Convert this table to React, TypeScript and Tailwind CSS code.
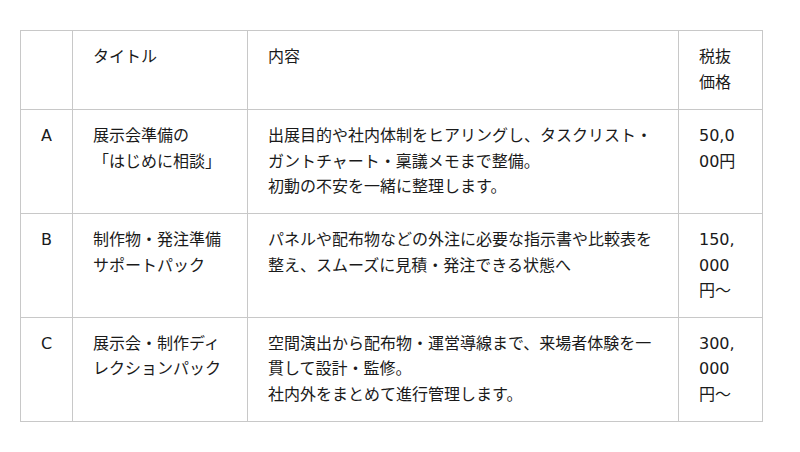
const plans = [
  {
    id: "A",
    title: (
      <>
        展示会準備の
        <br />
        「はじめに相談」
      </>
    ),
    body: (
      <>
        出展目的や社内体制をヒアリングし、タスクリスト・ガントチャート・稟議メモまで整備。
        <br />
        初動の不安を一緒に整理します。
      </>
    ),
    price: "50,000円",
  },
  {
    id: "B",
    title: (
      <>
        制作物・発注準備
        <br />
        サポートパック
      </>
    ),
    body: <>パネルや配布物などの外注に必要な指示書や比較表を整え、スムーズに見積・発注できる状態へ</>,
    price: "150,000円〜",
  },
  {
    id: "C",
    title: <>展示会・制作ディレクションパック</>,
    body: (
      <>
        空間演出から配布物・運営導線まで、来場者体験を一貫して設計・監修。
        <br />
        社内外をまとめて進行管理します。
      </>
    ),
    price: "300,000円〜",
  },
];

const cell = "border border-[#c8c8c8] px-5 py-[13px] align-top";
const head = `${cell} pb-[14px] text-left font-normal`;

export default function App() {
  return (
    <div className="min-h-[452px] bg-white pl-5 pt-[30px] text-[16px] leading-[1.6] text-[#1a1a1a] [font-family:'DejaVu_Sans','Noto_Sans_CJK_JP',sans-serif]">
      <table className="w-[742px] table-fixed border-collapse">
        <colgroup>
          <col className="w-[52px]" />
          <col className="w-[175px]" />
          <col className="w-[431px]" />
          <col className="w-[84px]" />
        </colgroup>
        <thead>
          <tr>
            <th className={head} />
            <th className={head}>タイトル</th>
            <th className={head}>内容</th>
            <th className={`${head} break-all`}>税抜価格</th>
          </tr>
        </thead>
        <tbody>
          {plans.map((p) => (
            <tr key={p.id}>
              <td className={`${cell} text-center`}>{p.id}</td>
              <td className={cell}>{p.title}</td>
              <td className={cell}>{p.body}</td>
              <td className={`${cell} break-all`}>{p.price}</td>
            </tr>
          ))}
        </tbody>
      </table>
    </div>
  );
}
